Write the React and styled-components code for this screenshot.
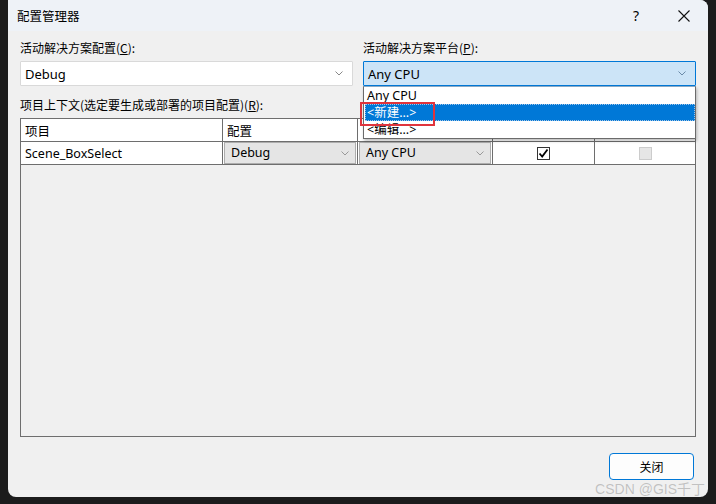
import React from "react";
import styled, { createGlobalStyle } from "styled-components";

const Global = createGlobalStyle`
  html, body { margin: 0; padding: 0; background: #1c1c1c; }
  body { font-family: "Noto Sans", "Noto Sans CJK SC", sans-serif; font-size: 12px; color: #000; }
  * { box-sizing: border-box; }
`;

const Page = styled.div`
  width: 716px;
  height: 504px;
  padding-left: 8px;
  overflow: hidden;
`;

const Window = styled.div`
  position: relative;
  width: 700px;
  height: 497px;
  background: #f0f0f0;
  border-radius: 0 8px 8px 8px;
  display: flex;
  flex-direction: column;
  overflow: hidden;
`;

const TitleBar = styled.div`
  height: 31px;
  background: #eef2f7;
  display: flex;
  align-items: center;
  padding-left: 9px;
`;

const Title = styled.div`
  flex: 1;
  font-family: "Noto Sans CJK SC", sans-serif;
  font-size: 12.5px;
  line-height: 16px;
`;

const TitleBtn = styled.div`
  width: ${p => p.$w}px;
  display: flex;
  justify-content: center;
  align-items: center;
  font-family: "Noto Sans", sans-serif;
  font-size: 14px;
`;

const Content = styled.div`
  flex: 1;
  display: flex;
  flex-direction: column;
  padding: 9px 12px 0 12px;
`;

const TopGrid = styled.div`
  display: grid;
  grid-template-columns: 333px 333px;
  column-gap: 10px;
`;

const Field = styled.div`
  position: relative;
  display: flex;
  flex-direction: column;
`;

const Label = styled.div`
  height: 16px;
  line-height: 16px;
  font-family: "Noto Sans CJK SC", sans-serif;
  font-size: 12px;
  margin-bottom: ${p => p.$mb || 5}px;
  margin-top: ${p => p.$mt || 0}px;
  u { text-decoration: underline; }
`;

const Combo = styled.div`
  height: 25px;
  border: 1px solid ${p => (p.$active ? "#0078d7" : "#d9d9d9")};
  background: ${p => (p.$active ? "#cce4f7" : "#fff")};
  display: flex;
  align-items: center;
  padding: 0 9px 0 4px;
  font-size: 13px;
  border-radius: 1px;
`;

const ComboText = styled.div`
  flex: 1;
  line-height: 16px;
`;

const Chevron = ({ color = "#707070" }) => (
  <svg width="8" height="5" viewBox="0 0 8 5">
    <path d="M0.5 0.5 L4 4 L7.5 0.5" fill="none" stroke={color} strokeWidth="1" />
  </svg>
);

const DropList = styled.div`
  position: absolute;
  top: 46px;
  left: 0;
  width: 333px;
  background: #fff;
  border: 1px solid #6b6b6b;
  border-top-color: #8aa9c4;
  box-shadow: 1px 2px 3px rgba(0,0,0,0.25);
  z-index: 5;
  padding: 0 0 0 1px;
`;

const DropItem = styled.div`
  height: 17px;
  line-height: 17px;
  padding-left: 2px;
  font-size: 12.5px;
  font-family: "Noto Sans", "Noto Sans CJK SC", sans-serif;
  background: ${p => (p.$sel ? "#0078d7" : "#fff")};
  color: ${p => (p.$sel ? "#fff" : "#000")};
  outline: ${p => (p.$sel ? "1px dotted #a0c4e8" : "none")};
  outline-offset: -1px;
`;

const RedBox = styled.div`
  position: absolute;
  left: -3px;
  top: 62px;
  width: 75px;
  height: 24px;
  border: 2px solid #e0343c;
  z-index: 6;
`;

const Table = styled.div`
  height: 319px;
  border: 1px solid #6e6e6e;
  background: #f0f0f0;
  display: flex;
  flex-direction: column;
`;

const Row = styled.div`
  display: grid;
  grid-template-columns: 202px 135px 135px 102px 1fr;
  height: 23px;
  background: #fff;
  border-bottom: 1px solid #6e6e6e;
`;

const Cell = styled.div`
  border-right: ${p => (p.$last ? "none" : "1px solid #6e6e6e")};
  display: flex;
  align-items: center;
  justify-content: ${p => (p.$center ? "center" : "flex-start")};
  padding-left: ${p => (p.$center ? 0 : 4)}px;
  font-size: 12.5px;
  font-family: "Noto Sans", "Noto Sans CJK SC", sans-serif;
`;

const CellCombo = styled.div`
  flex: 1;
  height: 22px;
  margin-left: -3px;
  margin-right: 1px;
  background: #e5e5e5;
  border: 1px solid #adadad;
  display: flex;
  align-items: center;
  padding: 0 6px 0 6px;
  font-size: 12.5px;
`;

const CheckBox = styled.div`
  width: 13px;
  height: 13px;
  border: 1px solid ${p => (p.$disabled ? "#cccccc" : "#333")};
  background: ${p => (p.$disabled ? "#e6e6e6" : "#fff")};
  display: flex;
  align-items: center;
  justify-content: center;
`;

const Footer = styled.div`
  display: flex;
  justify-content: flex-end;
  padding: 16px 2px 0 0;
`;

const Button = styled.div`
  width: 85px;
  height: 27px;
  border: 1.5px solid #0078d7;
  border-radius: 4px;
  background: #fdfdfd;
  display: flex;
  align-items: center;
  justify-content: center;
  font-family: "Noto Sans CJK SC", sans-serif;
  font-size: 12px;
`;

const Watermark = styled.div`
  position: absolute;
  right: 3px;
  bottom: -1px;
  font-family: "Liberation Sans", "Noto Sans CJK SC", sans-serif;
  font-size: 14px;
  color: rgba(190, 190, 190, 0.95);
  text-shadow: 0 0 1px rgba(255,255,255,0.6);
  z-index: 9;
`;

export default function App() {
  return (
    <Page>
      <Global />
      <Window>
        <TitleBar>
          <Title>配置管理器</Title>
          <TitleBtn $w={22}>?</TitleBtn>
          <TitleBtn $w={25} style={{ marginLeft: 24, marginRight: 12 }}>
            <svg width="12" height="12" viewBox="0 0 12 12">
              <path d="M0.5 0.5 L11.5 11.5 M11.5 0.5 L0.5 11.5" stroke="#111" strokeWidth="1.1" />
            </svg>
          </TitleBtn>
        </TitleBar>
        <Content>
          <TopGrid>
            <Field>
              <Label>活动解决方案配置(<u>C</u>):</Label>
              <Combo>
                <ComboText>Debug</ComboText>
                <Chevron color="#888" />
              </Combo>
            </Field>
            <Field>
              <Label>活动解决方案平台(<u>P</u>):</Label>
              <Combo $active>
                <ComboText>Any CPU</ComboText>
                <Chevron color="#6a8aa8" />
              </Combo>
              <DropList>
                <DropItem>Any CPU</DropItem>
                <DropItem $sel>&lt;新建...&gt;</DropItem>
                <DropItem>&lt;编辑...&gt;</DropItem>
              </DropList>
              <RedBox />
            </Field>
          </TopGrid>
          <Label $mt={11}>项目上下文(选定要生成或部署的项目配置)(<u>R</u>):</Label>
          <Table>
            <Row>
              <Cell>项目</Cell>
              <Cell>配置</Cell>
              <Cell />
              <Cell $center />
              <Cell $center $last />
            </Row>
            <Row>
              <Cell>Scene_BoxSelect</Cell>
              <Cell>
                <CellCombo>
                  <ComboText>Debug</ComboText>
                  <Chevron color="#999" />
                </CellCombo>
              </Cell>
              <Cell>
                <CellCombo>
                  <ComboText>Any CPU</ComboText>
                  <Chevron color="#999" />
                </CellCombo>
              </Cell>
              <Cell $center>
                <CheckBox>
                  <svg width="11" height="11" viewBox="0 0 11 11">
                    <path d="M1.5 5.5 L4.2 8.5 L9.5 1.5" fill="none" stroke="#000" strokeWidth="1.8" />
                  </svg>
                </CheckBox>
              </Cell>
              <Cell $center $last>
                <CheckBox $disabled />
              </Cell>
            </Row>
          </Table>
          <Footer>
            <Button>关闭</Button>
          </Footer>
        </Content>
        <Watermark>CSDN @GIS千丁</Watermark>
      </Window>
    </Page>
  );
}
